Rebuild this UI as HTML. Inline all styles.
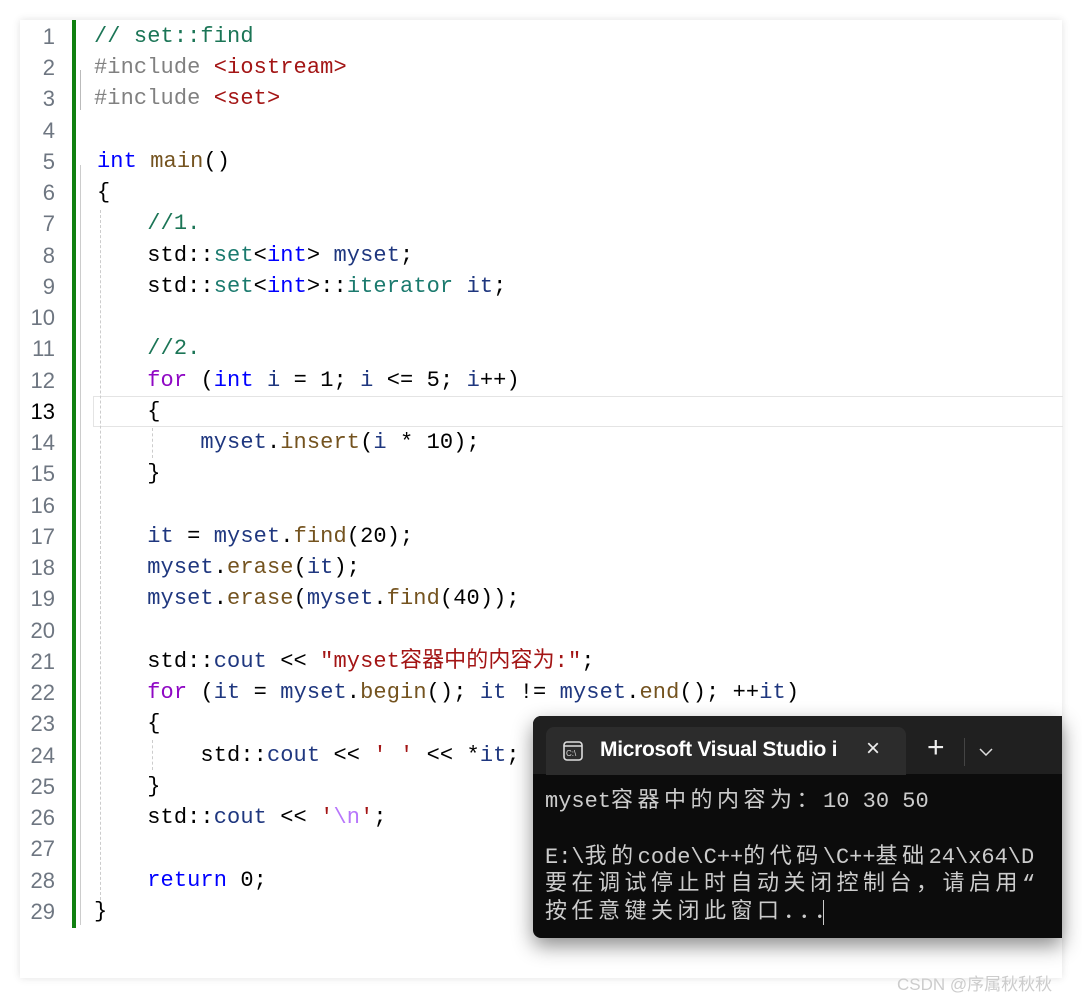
<!DOCTYPE html>
<html><head><meta charset="utf-8"><style>
body{margin:0;width:1082px;height:998px;background:#fff;position:relative;overflow:hidden;font-family:"Liberation Mono","Noto Sans CJK SC",monospace}
.card{position:absolute;left:20px;top:20px;width:1042px;height:958px;background:#fff;box-shadow:0 0 8px rgba(0,0,0,.12)}
.ln{position:absolute;left:20px;width:35px;text-align:right;font-family:"Liberation Sans",sans-serif;font-size:22px;color:#6e7681;line-height:31px}
.c{position:absolute;left:94px;font-size:22px;line-height:31px;white-space:pre;color:#000;letter-spacing:.1px;top:0}
.cm{color:#1b7556}.kw{color:#0000ff}.pp{color:#808080}.st{color:#a31515}.fn{color:#74531f}.ty{color:#2b91af}.v{color:#1f377f}.fl{color:#8f08c4}.tl{color:#1b7a6e}
.bar{position:absolute;left:72px;top:20px;width:4px;height:908px;background:#108010}
.term{position:absolute;left:533px;top:716px;width:529px;height:222px;background:#0c0c0c;border-radius:8px 0 0 8px;box-shadow:0 8px 20px rgba(0,0,0,.45);overflow:hidden}
.tb{position:absolute;left:0;top:0;right:0;height:58px;background:#202020}
.tab{position:absolute;left:13px;top:11px;width:360px;height:48px;background:#2c2c2c;border-radius:8px 8px 0 0}
.tt{position:absolute;font-size:22px;line-height:27px;color:#cccccc;white-space:pre;left:12px;font-family:"Liberation Mono","Noto Sans CJK SC",monospace}
.k{letter-spacing:4.5px}
</style></head><body>
<div class="card"></div>
<div class="bar"></div>
<div style="position:absolute;left:93px;top:396px;width:969px;height:29px;border:1px solid #e4e4e4;border-right:none"></div>
<div style="position:absolute;left:80px;top:70px;width:1px;height:40px;background:#bbb"></div>
<div style="position:absolute;left:80px;top:165px;width:1px;height:760px;background:#ccc"></div>
<div style="position:absolute;left:100px;top:210px;height:700px;border-left:1px dashed #ccc"></div>
<div style="position:absolute;left:152px;top:428px;height:30px;border-left:1px dashed #ccc"></div>
<div style="position:absolute;left:152px;top:740px;height:30px;border-left:1px dashed #ccc"></div>
<div class="ln" style="top:21px">1</div><div class="ln" style="top:52px">2</div><div class="ln" style="top:83px">3</div><div class="ln" style="top:115px">4</div><div class="ln" style="top:146px">5</div><div class="ln" style="top:177px">6</div><div class="ln" style="top:208px">7</div><div class="ln" style="top:240px">8</div><div class="ln" style="top:271px">9</div><div class="ln" style="top:302px">10</div><div class="ln" style="top:333px">11</div><div class="ln" style="top:365px">12</div><div class="ln" style="top:396px;color:#000">13</div><div class="ln" style="top:427px">14</div><div class="ln" style="top:458px">15</div><div class="ln" style="top:490px">16</div><div class="ln" style="top:521px">17</div><div class="ln" style="top:552px">18</div><div class="ln" style="top:583px">19</div><div class="ln" style="top:615px">20</div><div class="ln" style="top:646px">21</div><div class="ln" style="top:677px">22</div><div class="ln" style="top:708px">23</div><div class="ln" style="top:740px">24</div><div class="ln" style="top:771px">25</div><div class="ln" style="top:802px">26</div><div class="ln" style="top:833px">27</div><div class="ln" style="top:865px">28</div><div class="ln" style="top:896px">29</div>
<div class="c" style="top:21px"><span class="cm">// set::find</span></div>
<div class="c" style="top:52px"><span class="pp">#include</span> <span class="st">&lt;iostream&gt;</span></div>
<div class="c" style="top:83px"><span class="pp">#include</span> <span class="st">&lt;set&gt;</span></div>
<div class="c" style="top:146px;left:97px"><span class="kw">int</span> <span class="fn">main</span>()</div>
<div class="c" style="top:177px;left:97px">{</div>
<div class="c" style="top:208px">    <span class="cm">//1.</span></div>
<div class="c" style="top:240px">    std::<span class="tl">set</span>&lt;<span class="kw">int</span>&gt; <span class="v">myset</span>;</div>
<div class="c" style="top:271px">    std::<span class="tl">set</span>&lt;<span class="kw">int</span>&gt;::<span class="tl">iterator</span> <span class="v">it</span>;</div>
<div class="c" style="top:333px">    <span class="cm">//2.</span></div>
<div class="c" style="top:365px">    <span class="fl">for</span> (<span class="kw">int</span> <span class="v">i</span> = 1; <span class="v">i</span> &lt;= 5; <span class="v">i</span>++)</div>
<div class="c" style="top:396px">    {</div>
<div class="c" style="top:427px">        <span class="v">myset</span>.<span class="fn">insert</span>(<span class="v">i</span> * 10);</div>
<div class="c" style="top:458px">    }</div>
<div class="c" style="top:521px">    <span class="v">it</span> = <span class="v">myset</span>.<span class="fn">find</span>(20);</div>
<div class="c" style="top:552px">    <span class="v">myset</span>.<span class="fn">erase</span>(<span class="v">it</span>);</div>
<div class="c" style="top:583px">    <span class="v">myset</span>.<span class="fn">erase</span>(<span class="v">myset</span>.<span class="fn">find</span>(40));</div>
<div class="c" style="top:646px">    std::<span class="v">cout</span> &lt;&lt; <span class="st">"myset容器中的内容为:"</span>;</div>
<div class="c" style="top:677px">    <span class="fl">for</span> (<span class="v">it</span> = <span class="v">myset</span>.<span class="fn">begin</span>(); <span class="v">it</span> != <span class="v">myset</span>.<span class="fn">end</span>(); ++<span class="v">it</span>)</div>
<div class="c" style="top:708px">    {</div>
<div class="c" style="top:740px">        std::<span class="v">cout</span> &lt;&lt; <span class="st">' '</span> &lt;&lt; *<span class="v">it</span>;</div>
<div class="c" style="top:771px">    }</div>
<div class="c" style="top:802px">    std::<span class="v">cout</span> &lt;&lt; <span class="st">'<span style="color:#b776fb">\n</span>'</span>;</div>
<div class="c" style="top:865px">    <span class="kw">return</span> 0;</div>
<div class="c" style="top:896px;left:94px">}</div>
<div class="term">
 <div class="tb"></div>
 <div class="tab">
  <svg style="position:absolute;left:17px;top:14px" width="20" height="20" viewBox="0 0 20 20"><rect x="1" y="1" width="18" height="18" rx="3" fill="none" stroke="#ddd" stroke-width="1.6"/><line x1="1" y1="5" x2="19" y2="5" stroke="#ddd" stroke-width="1.4"/><text x="3" y="15" font-size="8" fill="#ddd" font-family="Liberation Sans">C:\</text></svg>
  <div style="position:absolute;left:54px;top:11px;font-family:'Liberation Sans',sans-serif;font-size:21px;color:#fff;font-weight:bold;letter-spacing:-.3px">Microsoft Visual Studio i</div>
  <div style="position:absolute;left:320px;top:8px;font-family:'Liberation Sans',sans-serif;font-size:24px;color:#eee">×</div>
 </div>
 <div style="position:absolute;left:394px;top:18px;font-family:'Liberation Sans',sans-serif;font-size:30px;color:#eee;line-height:28px">+</div>
 <div style="position:absolute;left:431px;top:22px;width:1px;height:28px;background:#444"></div>
 <svg style="position:absolute;left:446px;top:32px" width="14" height="8"><path d="M1 1 L7 7 L13 1" stroke="#ddd" stroke-width="1.5" fill="none"/></svg>
 <div class="tt" style="top:72px">myset<span class="k">容器中的内容为：</span>10 30 50</div>
 <div class="tt" style="top:128px">E:\<span class="k">我的</span>code\C++<span class="k">的代码</span>\C++<span class="k">基础</span>24\x64\D</div>
 <div class="tt" style="top:155px"><span class="k">要在调试停止时自动关闭控制台，请启用“</span></div>
 <div class="tt" style="top:183px"><span class="k">按任意键关闭此窗口．．．</span><span style="border-left:1px solid #ccc;margin-left:-18px"></span></div>
</div>
<div style="position:absolute;left:897px;top:970px;font-family:'Liberation Sans','Noto Sans CJK SC',sans-serif;font-size:17px;color:#ccc">CSDN @序属秋秋秋</div>
</body></html>
